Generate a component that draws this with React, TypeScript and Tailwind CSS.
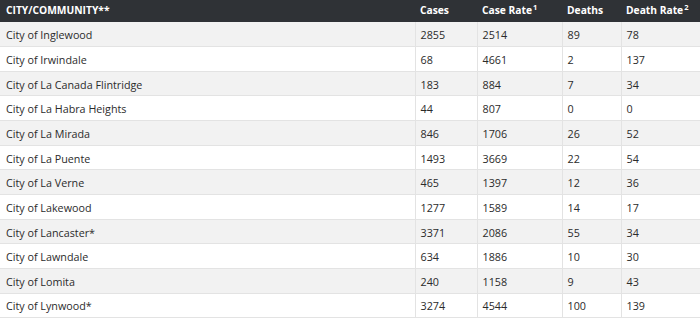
import React from "react";

const rows: [string, string, string, string, string][] = [
  ["City of Inglewood", "2855", "2514", "89", "78"],
  ["City of Irwindale", "68", "4661", "2", "137"],
  ["City of La Canada Flintridge", "183", "884", "7", "34"],
  ["City of La Habra Heights", "44", "807", "0", "0"],
  ["City of La Mirada", "846", "1706", "26", "52"],
  ["City of La Puente", "1493", "3669", "22", "54"],
  ["City of La Verne", "465", "1397", "12", "36"],
  ["City of Lakewood", "1277", "1589", "14", "17"],
  ["City of Lancaster*", "3371", "2086", "55", "34"],
  ["City of Lawndale", "634", "1886", "10", "30"],
  ["City of Lomita", "240", "1158", "9", "43"],
  ["City of Lynwood*", "3274", "4544", "100", "139"],
];

export default function App() {
  return (
    <div className="w-[700px] h-[321px] bg-white overflow-hidden" style={{ fontFamily: '"Open Sans", "Noto Sans", sans-serif' }}>
      <table className="w-[700px] border-collapse table-fixed text-[10.75px] text-[#2b2b2b]">
        <colgroup>
          <col className="w-[415px]" />
          <col className="w-[62px]" />
          <col className="w-[85px]" />
          <col className="w-[59px]" />
          <col className="w-[79px]" />
        </colgroup>
        <thead>
          <tr className="bg-[#2f3236] text-white h-[22px] text-[10.25px] font-bold">
            <th className="text-left pl-[6px] font-bold">CITY/COMMUNITY**</th>
            <th className="text-left pl-[5px] font-bold">Cases</th>
            <th className="text-left pl-[5px] font-bold whitespace-nowrap">
              Case Rate<span className="text-[7.5px] relative -top-[4px] ml-[1px]">1</span>
            </th>
            <th className="text-left pl-[5px] font-bold">Deaths</th>
            <th className="text-left pl-[5px] font-bold whitespace-nowrap">
              Death Rate<span className="text-[7.5px] relative -top-[4px] ml-[1px]">2</span>
            </th>
          </tr>
        </thead>
        <tbody>
          {rows.map((r, i) => (
            <tr key={i} className={`h-[24.67px] border-b border-[#e3e3e3] ${i % 2 === 0 ? "bg-[#f2f2f2]" : "bg-white"}`}>
              <td className="pl-[6px] pt-[2px] pb-0 whitespace-nowrap">{r[0]}</td>
              <td className="pl-[5px] pt-[2px] pb-0 border-l border-[#e3e3e3]">{r[1]}</td>
              <td className="pl-[5px] pt-[2px] pb-0 border-l border-[#e3e3e3]">{r[2]}</td>
              <td className="pl-[5px] pt-[2px] pb-0 border-l border-[#e3e3e3]">{r[3]}</td>
              <td className="pl-[5px] pt-[2px] pb-0 border-l border-[#e3e3e3]">{r[4]}</td>
            </tr>
          ))}
        </tbody>
      </table>
    </div>
  );
}
